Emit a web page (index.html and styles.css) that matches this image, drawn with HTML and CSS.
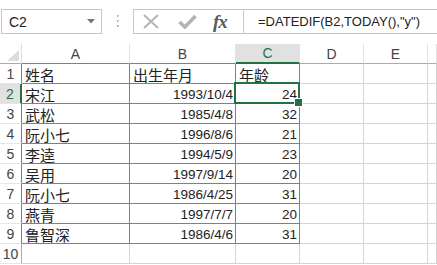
FILE: index.html
```html
<!DOCTYPE HTML>
<html>
<head>
<meta charset="utf-8">
<link rel="stylesheet" href="styles.css">
</head>
<body>
<div class="topbar">
  <div class="namebox">
    <span>C2</span>
    <svg width="8" height="5" viewBox="0 0 8 5"><polygon points="0,0 8,0 4,4.5" fill="#777"/></svg>
  </div>
  <div class="sep">
    <svg width="3" height="13" viewBox="0 0 3 13"><rect x="1" y="0" width="1.5" height="2" fill="#aaa"/><rect x="1" y="5" width="1.5" height="2" fill="#aaa"/><rect x="1" y="10" width="1.5" height="2" fill="#aaa"/></svg>
  </div>
  <div class="fbar">
    <div class="fbtns">
      <svg class="ico-x" width="16" height="15" viewBox="0 0 16 15"><path d="M1 1 L15 14 M15 1 L1 14" stroke="#b4b4b4" stroke-width="2" fill="none"/></svg>
      <svg class="ico-ok" width="19" height="15" viewBox="0 0 19 15"><path d="M1.5 8 L7 13 L17.5 2" stroke="#b4b4b4" stroke-width="3.6" fill="none"/></svg>
      <span class="fx">fx</span>
    </div>
    <div class="finput">=DATEDIF(B2,TODAY(),"y")</div>
  </div>
</div>

<div class="sheet">
  <div class="corner"><svg width="12" height="11" viewBox="0 0 12 11"><polygon points="12,0 12,11 0,11" fill="#dcdcdc"/></svg></div>
  <div class="ch bl">A</div>
  <div class="ch bl">B</div>
  <div class="ch on">C</div>
  <div class="ch">D</div>
  <div class="ch">E</div>
  <div class="ch"></div>

  <div class="rh bl">1</div>
  <div class="c b t">姓名</div>
  <div class="c b t">出生年月</div>
  <div class="c b t">年龄</div>
  <div class="c"></div><div class="c"></div><div class="c"></div>

  <div class="rh on">2</div>
  <div class="c b t">宋江</div>
  <div class="c b n">1993/10/4</div>
  <div class="c b n sel">24</div>
  <div class="c"></div><div class="c"></div><div class="c"></div>

  <div class="rh bl">3</div>
  <div class="c b t">武松</div>
  <div class="c b n">1985/4/8</div>
  <div class="c b n">32</div>
  <div class="c"></div><div class="c"></div><div class="c"></div>

  <div class="rh bl">4</div>
  <div class="c b t">阮小七</div>
  <div class="c b n">1996/8/6</div>
  <div class="c b n">21</div>
  <div class="c"></div><div class="c"></div><div class="c"></div>

  <div class="rh bl">5</div>
  <div class="c b t">李逵</div>
  <div class="c b n">1994/5/9</div>
  <div class="c b n">23</div>
  <div class="c"></div><div class="c"></div><div class="c"></div>

  <div class="rh bl">6</div>
  <div class="c b t">吴用</div>
  <div class="c b n">1997/9/14</div>
  <div class="c b n">20</div>
  <div class="c"></div><div class="c"></div><div class="c"></div>

  <div class="rh bl">7</div>
  <div class="c b t">阮小七</div>
  <div class="c b n">1986/4/25</div>
  <div class="c b n">31</div>
  <div class="c"></div><div class="c"></div><div class="c"></div>

  <div class="rh bl">8</div>
  <div class="c b t">燕青</div>
  <div class="c b n">1997/7/7</div>
  <div class="c b n">20</div>
  <div class="c"></div><div class="c"></div><div class="c"></div>

  <div class="rh bl">9</div>
  <div class="c b t">鲁智深</div>
  <div class="c b n">1986/4/6</div>
  <div class="c b n">31</div>
  <div class="c"></div><div class="c"></div><div class="c"></div>

  <div class="rh">10</div>
  <div class="c"></div><div class="c"></div><div class="c"></div>
  <div class="c"></div><div class="c"></div><div class="c"></div>
</div>
</body>
</html>
```

FILE: styles.css
```css
* {
  box-sizing: border-box;
}
body {
  margin: 0;
  width: 437px;
  height: 265px;
  overflow: hidden;
  background: #fff;
  font-family: "Liberation Sans", Arial, "Noto Sans CJK SC", sans-serif;
  color: #222;
}

/* name box + formula bar */
.topbar {
  display: flex;
  align-items: flex-start;
  height: 44px;
  padding-top: 9px;
}
.namebox {
  margin-left: 1px;
  width: 101px;
  height: 25px;
  border: 1px solid #c6c6c6;
  display: flex;
  align-items: center;
  justify-content: space-between;
  padding: 0 6px 0 7px;
  font-size: 14px;
}
.sep {
  width: 31px;
  display: flex;
  justify-content: center;
  padding-top: 6px;
}
.fbar {
  flex: 1;
  display: flex;
  height: 25px;
  border: 1px solid #c6c6c6;
  border-right: none;
}
.fbtns {
  width: 110px;
  flex: none;
  border-right: 1px solid #c6c6c6;
  display: flex;
  align-items: center;
}
.ico-x {
  margin-left: 9px;
}
.ico-ok {
  margin-left: 19px;
}
.fx {
  margin-left: 16px;
  font-family: "Liberation Serif", "Times New Roman", serif;
  font-style: italic;
  font-weight: bold;
  font-size: 19px;
  color: #5a5a5a;
  letter-spacing: -1px;
}
.finput {
  padding-left: 14px;
  font-size: 13px;
  line-height: 23px;
  white-space: nowrap;
}

/* sheet grid */
.sheet {
  display: grid;
  grid-template-columns: 22px 108px 106px 64px 64px 64px 1fr;
  grid-auto-rows: 20px;
}
.sheet > div {
  border-right: 1px solid #d4d4d4;
  border-bottom: 1px solid #d4d4d4;
  display: flex;
  align-items: center;
}
.corner {
  justify-content: flex-end;
  align-items: flex-end !important;
  padding: 0 2px 2px 0;
  border-right-color: #dadada !important;
  border-bottom-color: #ababab !important;
}
.ch {
  justify-content: center;
  font-size: 14px;
  color: #444;
  border-right-color: #e1e1e1 !important;
  border-bottom-color: #ababab !important;
}
.ch.bl {
  border-bottom-color: #2e9ad0 !important;
}
.ch.on {
  background: #e1e1e1;
  color: #217346;
  border-bottom: 2px solid #217346 !important;
}
.rh {
  justify-content: center;
  font-size: 14px;
  color: #444;
  border-bottom-color: #e6e6e6 !important;
  border-right-color: #ababab !important;
}
.rh.bl {
  border-right-color: #2e9ad0 !important;
}
.rh.on {
  background: #e1e1e1;
  color: #217346;
  border-right: 2px solid #217346 !important;
}
.c.b {
  border-color: #2e9ad0;
}
.t {
  padding: 1px 0 0 3px;
  font-family: "Noto Sans CJK SC", sans-serif;
  font-size: 15px;
}
.n {
  justify-content: flex-end;
  padding: 2px 2px 0 0;
  font-size: 13.5px;
}
.sel {
  position: relative;
  z-index: 2;
}
.sel::after {
  content: "";
  position: absolute;
  left: -2px;
  top: -2px;
  right: -1px;
  bottom: -1px;
  border: 2px solid #217346;
}
.sel::before {
  content: "";
  position: absolute;
  right: -4px;
  bottom: -4px;
  width: 7px;
  height: 7px;
  background: #217346;
  border: 1px solid #fff;
  z-index: 3;
}
```
